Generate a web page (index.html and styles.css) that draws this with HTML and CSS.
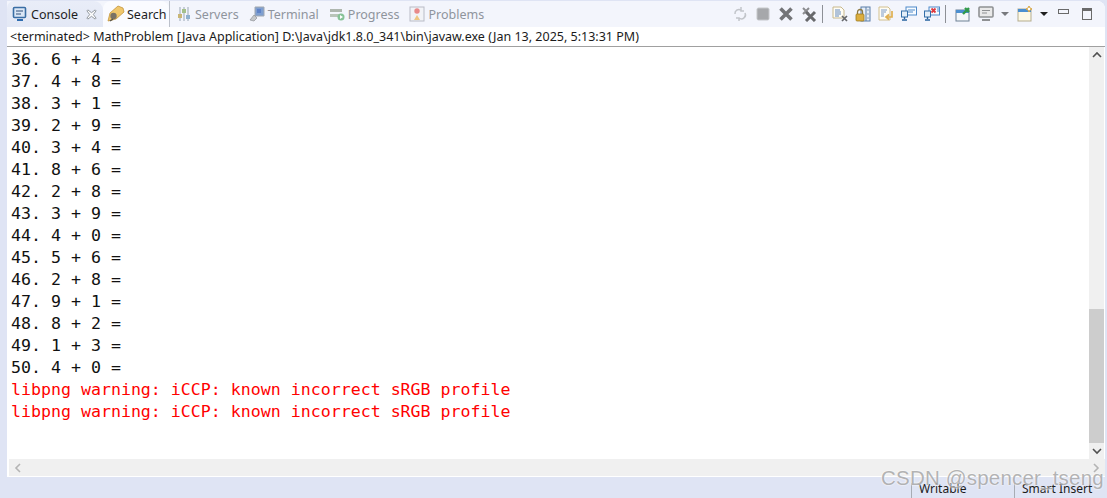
FILE: index.html
```html
<!DOCTYPE html>
<html lang="en">
<head>
<meta charset="utf-8">
<title>Console</title>
<link rel="stylesheet" href="styles.css">
</head>
<body>
<div class="app">
  <div class="panel">
    <div class="toolbar">
      <div class="tabs">
        <div class="tab tab-active">
          <svg class="ic" viewBox="0 0 16 16"><rect x="1.5" y="1.5" width="12" height="10" rx="1" fill="#dbe7f6" stroke="#3a6ea5" stroke-width="1.6"/><path d="M4 5h7M4 8h5" stroke="#2e4f78"/><path d="M5 14h6" stroke="#2f6db0" stroke-width="2"/></svg>
          <span class="tab-label">Console</span>
          <svg class="close" viewBox="0 0 12 12"><path d="M2 1l4 3 4-3 1 1-3 4 3 4-1 1-4-3-4 3-1-1 3-4-3-4z" fill="#fff" stroke="#8a8f96"/></svg>
        </div>
        <div class="tab tab-search">
          <svg class="ic" viewBox="0 0 18 18"><path d="M1 16l2-8 8-7 5 2 1 4-8 7z" fill="#f0c76c" stroke="#c4953c" stroke-width=".8"/><circle cx="6.500" cy="11" r="3.200" fill="#7a7264"/><path d="M3 16l3-2" stroke="#5c5648" stroke-width="1.500"/></svg>
          <span class="tab-label">Search</span>
        </div>
        <div class="tab tab-dim tab-first">
          <svg class="ic" viewBox="0 0 16 16"><path d="M4 1v14M8 1v14M12 1v14" stroke="#9aa7b5"/><rect x="2" y="8" width="4" height="4" fill="#c9b676"/><rect x="6" y="3" width="4" height="4" fill="#a5c08a"/><rect x="10" y="9" width="4" height="4" fill="#8fb0cf"/></svg>
          <span class="tab-label">Servers</span>
        </div>
        <div class="tab tab-dim">
          <svg class="ic" viewBox="0 0 16 16"><path d="M6 1h9v9H6z" fill="#7f9fd0" stroke="#a3a9b0"/><path d="M8 3h4v4H8z" fill="#5f83c7"/><path d="M1 14l4-5 3 3-3 3z" fill="#c6c8ca" stroke="#8f9296" stroke-width=".7"/></svg>
          <span class="tab-label">Terminal</span>
        </div>
        <div class="tab tab-dim">
          <svg class="ic" viewBox="0 0 16 16"><rect x="1" y="3" width="12" height="3" fill="#aeb6ae"/><rect x="1" y="8" width="9" height="3" fill="#b9c4b9"/><circle cx="12" cy="11" r="3.500" fill="#87c297"/><path d="M11 9l3 2-3 2z" fill="#fff"/></svg>
          <span class="tab-label">Progress</span>
        </div>
        <div class="tab tab-dim">
          <svg class="ic" viewBox="0 0 16 16"><rect x="1" y="1" width="14" height="14" fill="#f2f3f7" stroke="#b9bcc6"/><circle cx="8" cy="5" r="2.700" fill="#e88a8a"/><path d="M5 14l3-5 3 5z" fill="#eec783"/></svg>
          <span class="tab-label">Problems</span>
        </div>
      </div>
      <div class="actions">
        <span class="tb"><svg class="ti" viewBox="0 0 16 16"><path d="M3 8a4 4 0 0 1 6-4M13 7a4 4 0 0 1-6 5M9 1v4h3M7 15v-3H4" fill="none" stroke="#c2c5ca" stroke-width="1.500"/></svg></span>
        <span class="tb"><svg class="ti" viewBox="0 0 16 16"><rect x="2" y="2" width="12" height="12" rx="1.500" fill="#a6a8ab" stroke="#c6c8cb"/></svg></span>
        <span class="tb"><svg class="ti" viewBox="0 0 16 16"><path d="M2.500 2.500l11 11M13.500 2.500l-11 11" stroke="#737477" stroke-width="3.600"/></svg></span>
        <span class="tb"><svg class="ti" viewBox="0 0 16 16"><path d="M2 2l6 6M8 2L2 8" stroke="#8b8c8f" stroke-width="2"/><path d="M5 6l9 9M14 6l-9 9" stroke="#68696c" stroke-width="3"/></svg></span>
        <span class="sep"></span>
        <span class="tb"><svg class="ti" viewBox="0 0 16 16"><path d="M1 1h8l3 3v8H1z" fill="#fffdf4" stroke="#c8b88c"/><path d="M3 4h5M3 6h6M3 8h6M3 10h4" stroke="#6489bd"/><path d="M10 10l5 5M15 10l-5 5" stroke="#66686b" stroke-width="1.700"/></svg></span>
        <span class="tb"><svg class="ti" viewBox="0 0 16 16"><rect x="6" y="1" width="9" height="14" fill="#e6eef8" stroke="#5b7ea8"/><path d="M11 1v14" stroke="#5b7ea8"/><path d="M12.500 4h1M12.500 8h1M12.500 12h1" stroke="#33557d"/><path d="M2.500 8V6a2.500 2.500 0 0 1 5 0v2" fill="none" stroke="#8d7a45" stroke-width="1.300"/><rect x="1" y="8" width="8" height="7" rx="1" fill="#dcae3f" stroke="#9d7b21" stroke-width=".8"/></svg></span>
        <span class="tb"><svg class="ti" viewBox="0 0 16 16"><path d="M1 1h9l2 2v11H1z" fill="#fffdf4" stroke="#d2c08f"/><path d="M3 4h6M3 6h5M3 8h3M3 10h3" stroke="#7b9bc8"/><path d="M14 5v6H9M11 8.500L8 11l3 2.500" fill="none" stroke="#e0b050" stroke-width="1.700"/></svg></span>
        <span class="tb"><svg class="ti" viewBox="0 0 16 16"><rect x="5" y="1" width="10.500" height="8" fill="#f7fbff" stroke="#4f8ac9"/><path d="M7 4h7M7 6h5" stroke="#4f8ac9"/><rect x="0.500" y="5" width="6" height="6" fill="#e4eef8" stroke="#336ea8"/><path d="M3.500 11v2M1 14h5" stroke="#28639e" stroke-width="1.400"/></svg></span>
        <span class="tb"><svg class="ti" viewBox="0 0 16 16"><rect x="5" y="1" width="10.500" height="8" fill="#f7fbff" stroke="#4f8ac9"/><path d="M7.500 2.500l4 4M11.500 2.500l-4 4" stroke="#e0393e" stroke-width="1.800"/><path d="M13 3h2M13 5h2" stroke="#4f8ac9"/><rect x="0.500" y="5" width="6" height="6" fill="#e4eef8" stroke="#336ea8"/><path d="M3.500 11v2M1 14h5" stroke="#28639e" stroke-width="1.400"/></svg></span>
        <span class="sep"></span>
        <span class="tb"><svg class="ti" viewBox="0 0 16 16"><rect x="1" y="4" width="13" height="11" fill="#f4f7fa" stroke="#6f8194"/><rect x="1" y="4" width="13" height="3" fill="#4b8fd0"/><path d="M8 8l6-6M10 2l4 4" stroke="#2f9a49" stroke-width="2.400"/></svg></span>
        <span class="tb"><svg class="ti" viewBox="0 0 16 16"><rect x="1" y="1" width="14" height="10" rx="1" fill="#e9e9e9" stroke="#8f9193" stroke-width="1.600"/><path d="M4 4.500h8M4 7h5" stroke="#8f9193"/><path d="M4 14h8" stroke="#8f9193" stroke-width="2"/></svg></span>
        <span class="tb-arrow"><span class="arrow arrow-dim"></span></span>
        <span class="tb"><svg class="ti" viewBox="0 0 16 16"><rect x="1" y="3" width="13" height="12" fill="#fdf9e7" stroke="#b5ad8d"/><rect x="1" y="3" width="13" height="3" fill="#4b8fd0"/><path d="M12 0l1 2 2 1-2 1-1 2-1-2-2-1 2-1z" fill="#fff" stroke="#d8a53f"/></svg></span>
        <span class="tb-arrow"><span class="arrow"></span></span>
        <span class="tb"><span class="win-min"></span></span>
        <span class="tb"><span class="win-max"></span></span>
      </div>
    </div>
    <div class="info">&lt;terminated&gt; MathProblem [Java Application] D:\Java\jdk1.8.0_341\bin\javaw.exe (Jan 13, 2025, 5:13:31 PM)</div>
    <div class="body">
      <div class="console">
        <div class="line">36. 6 + 4 =</div>
        <div class="line">37. 4 + 8 =</div>
        <div class="line">38. 3 + 1 =</div>
        <div class="line">39. 2 + 9 =</div>
        <div class="line">40. 3 + 4 =</div>
        <div class="line">41. 8 + 6 =</div>
        <div class="line">42. 2 + 8 =</div>
        <div class="line">43. 3 + 9 =</div>
        <div class="line">44. 4 + 0 =</div>
        <div class="line">45. 5 + 6 =</div>
        <div class="line">46. 2 + 8 =</div>
        <div class="line">47. 9 + 1 =</div>
        <div class="line">48. 8 + 2 =</div>
        <div class="line">49. 1 + 3 =</div>
        <div class="line">50. 4 + 0 =</div>
        <div class="line err">libpng warning: iCCP: known incorrect sRGB profile</div>
        <div class="line err">libpng warning: iCCP: known incorrect sRGB profile</div>
      </div>
      <div class="vbar">
        <svg class="chev" viewBox="0 0 10 8"><path d="M1 6l4-4 4 4" fill="none" stroke="#505050" stroke-width="1.600"/></svg>
        <div class="vtrack"><div class="vthumb"></div></div>
        <svg class="chev" viewBox="0 0 10 8"><path d="M1 2l4 4 4-4" fill="none" stroke="#505050" stroke-width="1.600"/></svg>
      </div>
    </div>
    <div class="hbar">
      <svg class="hchev" viewBox="0 0 8 10"><path d="M6 1L2 5l4 4" fill="none" stroke="#b4b4b4" stroke-width="1.600"/></svg>
      <svg class="hchev" viewBox="0 0 8 10"><path d="M2 1l4 4-4 4" fill="none" stroke="#b4b4b4" stroke-width="1.600"/></svg>
    </div>
  </div>
  <div class="status">
    <span class="cell cell-w">Writable</span>
    <span class="cell cell-s">Smart Insert</span>
  </div>
  <div class="mark">CSDN @spencer_tseng</div>
</div>
</body>
</html>
```
FILE: styles.css
```css
html, body {
  margin: 0;
  padding: 0;
  width: 1107px;
  height: 498px;
  overflow: hidden;
  background: #dfe4f4;
}
.app {
  position: relative;
  width: 1107px;
  height: 498px;
  display: flex;
  flex-direction: column;
  font-family: "Noto Sans", "Liberation Sans", sans-serif;
}
.panel {
  margin: 1px 2px 0 7px;
  height: 476px;
  display: flex;
  flex-direction: column;
  background: #fff;
  border-radius: 0 8px 0 0;
  overflow: hidden;
}
.toolbar {
  height: 26px;
  display: flex;
  justify-content: space-between;
  background: #f3f5fc;
  flex: none;
}
.tabs {
  display: flex;
  align-items: stretch;
}
.tab {
  display: flex;
  align-items: center;
  font-size: 12.500px;
  color: #1e1e1e;
  white-space: nowrap;
}
.tab-label {
  margin-left: 3px;
}
.ic {
  width: 16px;
  height: 16px;
  flex: none;
}
.tab-active {
  width: 96px;
  padding-left: 5px;
  box-sizing: border-box;
  background: linear-gradient(#e9edf8, #e3e8f5);
  border-radius: 7px 9px 0 0;
}
.close {
  width: 11px;
  height: 11px;
  margin-left: 8px;
}
.tab-search {
  width: 66px;
  padding-left: 4px;
  box-sizing: border-box;
  background: #fafbff;
  border-radius: 8px 8px 0 0;
}
.tab-search .ic {
  width: 18px;
  height: 18px;
}
.tab-search .tab-label {
  margin-left: 2px;
}
.tab-dim {
  color: #8f949c;
  margin-right: 10px;
}
.tab-first {
  border-left: 1px solid #bcc1cb;
  padding-left: 6px;
}
.actions {
  display: flex;
  align-items: center;
  padding-right: 7px;
}
.tb {
  width: 23px;
  height: 26px;
  display: flex;
  align-items: center;
  justify-content: center;
  flex: none;
}
.ti {
  width: 16px;
  height: 16px;
}
.sep {
  width: 1px;
  height: 18px;
  background: #8d9096;
  margin: 0 5px 0 2px;
  flex: none;
}
.tb-arrow {
  width: 16px;
  height: 26px;
  display: flex;
  align-items: center;
  justify-content: center;
  flex: none;
}
.arrow {
  width: 0;
  height: 0;
  border-left: 4px solid transparent;
  border-right: 4px solid transparent;
  border-top: 4px solid #1f1f1f;
}
.arrow-dim {
  border-top-color: #77797d;
}
.win-min {
  width: 9px;
  height: 3px;
  border: 1px solid #6a6a6a;
  margin-top: -6px;
}
.win-max {
  width: 8px;
  height: 8px;
  border: 1px solid #6a6a6a;
  border-top-width: 3px;
}
.info {
  height: 19px;
  line-height: 20px;
  flex: none;
  padding-left: 3px;
  font-size: 12.500px;
  color: #1b1b1b;
  white-space: nowrap;
  border-bottom: 1px solid #a0a0a0;
}
.body {
  flex: 1;
  display: flex;
  min-height: 0;
}
.console {
  flex: 1;
  padding: 2px 0 0 4px;
  font-family: "DejaVu Sans Mono", "Liberation Mono", monospace;
  font-size: 16.600px;
  color: #111;
}
.line {
  height: 22px;
  line-height: 22px;
  white-space: pre;
}
.err {
  color: #ff0000;
}
.vbar {
  width: 15px;
  margin-right: 1px;
  display: flex;
  flex-direction: column;
  background: #f0f0f0;
  flex: none;
}
.chev {
  width: 10px;
  height: 8px;
  margin: 4px auto;
  flex: none;
}
.vtrack {
  flex: 1;
  display: flex;
  flex-direction: column;
  justify-content: flex-end;
}
.vthumb {
  height: 134px;
  background: #cdcdcd;
}
.hbar {
  height: 17px;
  margin: 0 0 1px 2px;
  display: flex;
  align-items: center;
  justify-content: space-between;
  background: #f0f0f0;
  padding: 0 5px;
  flex: none;
}
.hchev {
  width: 8px;
  height: 10px;
}
.status {
  flex: 1;
  position: relative;
  font-size: 12px;
  color: #1b1b1b;
}
.cell {
  position: absolute;
  top: 6px;
  bottom: 0;
  border-left: 1px solid #a8acb4;
  padding-left: 7px;
  line-height: 12px;
  white-space: nowrap;
}
.cell-w {
  left: 911px;
}
.cell-s {
  left: 1014px;
}
.mark {
  position: absolute;
  left: 881px;
  top: 465px;
  font-family: "Liberation Sans", sans-serif;
  font-size: 20.500px;
  line-height: 26px;
  color: #a9a9a9;
  letter-spacing: .2px;
  white-space: nowrap;
  text-shadow: 0 0 2px #fff, 0 0 2px #fff;
  opacity: .85;
}
```
